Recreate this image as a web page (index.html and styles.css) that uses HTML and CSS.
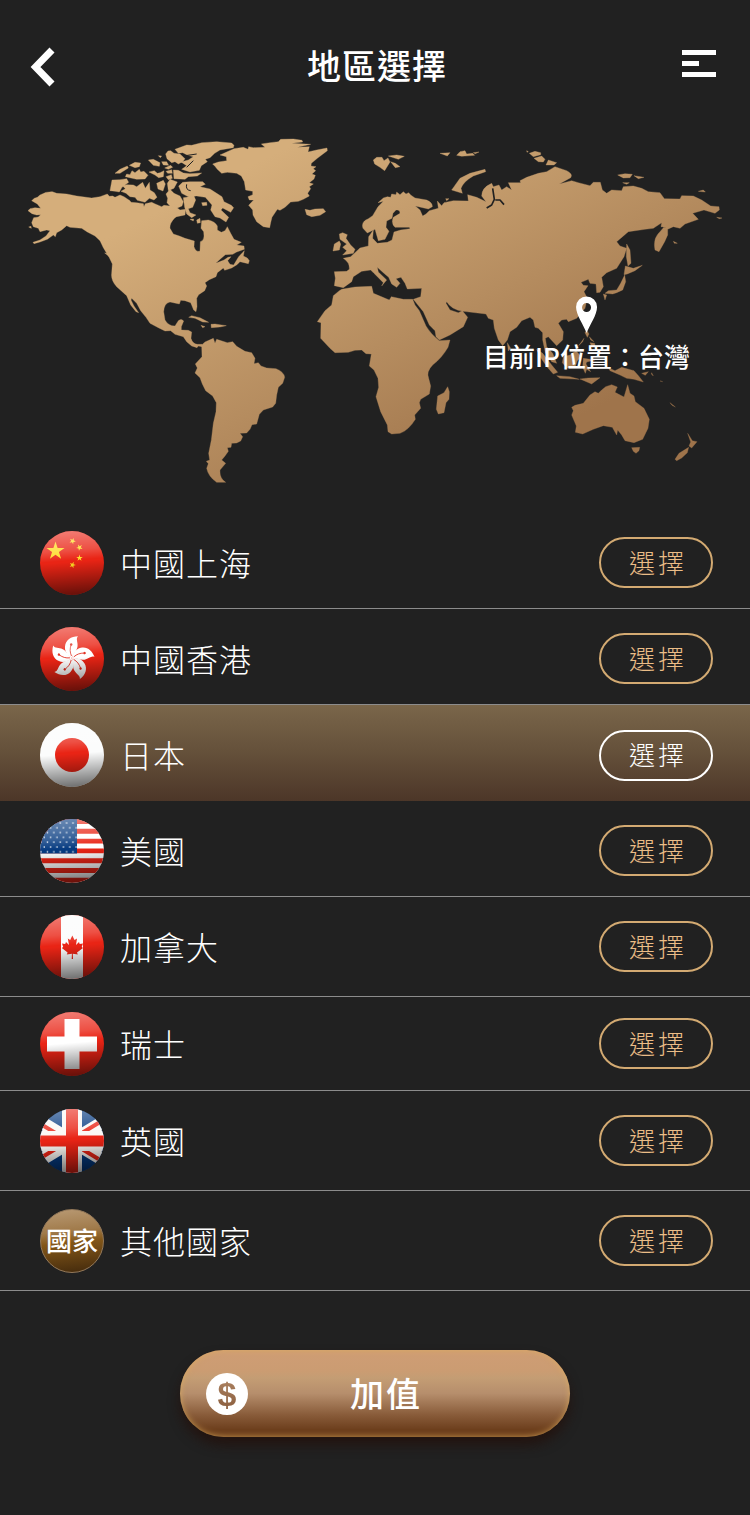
FILE: index.html
```html
<!DOCTYPE html>
<html lang="zh-Hant">
<head>
<meta charset="utf-8">
<meta name="viewport" content="width=device-width, initial-scale=1">
<title>地區選擇</title>
<link rel="stylesheet" href="styles.css">
</head>
<body>
<svg class="defs" aria-hidden="true">
  <defs>
    <linearGradient id="gloss" x1="0.46" y1="0" x2="0.54" y2="1">
      <stop offset="0" stop-color="#fff" stop-opacity=".4"/>
      <stop offset=".3" stop-color="#fff" stop-opacity=".2"/>
      <stop offset=".46" stop-color="#fff" stop-opacity="0"/>
      <stop offset=".48" stop-color="#000" stop-opacity="0"/>
      <stop offset="1" stop-color="#000" stop-opacity=".56"/>
    </linearGradient>
    <clipPath id="disc"><circle cx="32" cy="32" r="32"/></clipPath>
    <pattern id="stars" width="12.8" height="9.6" patternUnits="userSpaceOnUse" x="-1" y="2">
      <circle cx="2" cy="2" r=".8" fill="#fff"/><circle cx="8.4" cy="2" r=".8" fill="#fff"/>
      <circle cx="5.2" cy="6.8" r=".8" fill="#fff"/><circle cx="11.6" cy="6.8" r=".8" fill="#fff"/>
    </pattern>
    <path id="star" d="M0-1 .225-.309.951-.309.363.118.588.809 0 .382-.588.809-.363.118-.951-.309-.225-.309Z"/>
    <g id="petal">
      <path fill="#fff" d="M32 31C27 28 24.500 24 25 19.500C25.500 13 31 9.500 38 9.300C35.500 12 38 15 37.500 19.500C37 24 33.500 25.500 32 31Z"/>
      <path fill="none" stroke="#e02a1c" stroke-width=".8" d="M31.500 29C29.800 25 29.800 22 31 18"/>
      <circle cx="31.200" cy="17.500" r="1.200" fill="#e02a1c"/>
    </g>
  </defs>
</svg>

<header class="topbar">
  <button class="icon-button" type="button" aria-label="返回">
    <svg width="26" height="40" viewBox="0 0 26 40"><path d="M22 3 5.500 20 22 37" fill="none" stroke="#fff" stroke-width="7"/></svg>
  </button>
  <h1 class="title">地區選擇</h1>
  <button class="icon-button menu-button" type="button" aria-label="選單">
    <svg width="34" height="28" viewBox="0 0 34 28"><path d="M0 0h34v5H0zM0 11h17v5H0zM0 22h34v5H0z" fill="#fff"/></svg>
  </button>
</header>

<main>
<figure class="map">
  <svg class="world" viewBox="0 134 750 379" role="img" aria-label="世界地圖">
    <defs>
      <linearGradient id="gold" x1="0" y1="0" x2="1" y2="1">
        <stop offset=".2" stop-color="#d5ae7b"/>
        <stop offset=".56" stop-color="#b58c5f"/>
        <stop offset=".8" stop-color="#9f744b"/>
      </linearGradient>
      <mask id="land" maskUnits="userSpaceOnUse" x="0" y="134" width="750" height="379">
        <g fill="#fff" stroke="#fff" stroke-width="1" stroke-linejoin="round">
          <!-- North America and the Arctic islands -->
          <g transform="translate(20 130) scale(.33333)">
            <path d="M35 212 43 205 52 202 60 195Q78 184 97 185L110 190 140 192 170 198 215 204 240 200 262 192 268 199 278 198 285 202 300 195 312 200 330 212 333 217 350 218 370 221 372 230 376 221 395 217 404 221 425 230 432 226 450 228 441 218 443 205 438 192 450 178 462 190 480 198 490 215 486 228 472 234 480 240 497 238 495 255 470 260 465 263Q448 280 450 295L460 312Q480 318 495 325L523 333 522 350Q528 368 540 363L541 335Q552 332 552 318L551 305 543 295 545 272 565 270Q585 274 592 288L592 300 604 307 615 302 622 290 632 310 642 328 664 337 650 345 672 348 673 358 650 366 638 373 616 374 602 386 587 400 612 390 624 382 633 380 623 392 630 403 641 405 650 390 656 380 673 362 670 378 682 384 688 392 685 401 660 395 651 404 635 414 614 421 610 414 592 428 588 440 568 449 555 458 560 468 554 482 536 494 530 505 531 530 528 545 521 540 512 518 495 512 482 511 478 522 450 516Q432 520 431 545L435 570Q445 588 465 588L475 572Q485 564 491 573L484 590 484 600 505 601 515 606 513 625Q518 642 532 643L546 643 546 650 535 648 531 653 515 648 500 635 490 620 465 613 452 602 435 603 415 593 390 580 378 562 362 542 350 520 335 505 333 510 342 528 356 548 348 545 332 525 320 497 290 470Q272 450 275 430L277 402 268 383 250 353 240 332 225 318 202 306 185 295 150 292 140 287 125 300 110 308 106 320 100 315 82 328 60 336 42 341 39 337 60 330 78 318 90 302 80 300 60 305 55 295 40 290 35 278 41 263 55 261 62 254 50 255 36 251 24 242 30 236 45 233 62 235 52 222Z"/>
            <path d="M270 182 276 150 300 149 320 146 326 157 306 172 298 186 285 184ZM303 184 316 176 308 168 320 164 340 165 350 170 368 157 376 175 388 157 390 180 403 188 411 202 402 210 388 205 375 217 352 211 345 202 330 200 318 190ZM316 140 320 132 330 134 336 122 345 128 358 118 362 126 372 124 384 136 375 147 350 148ZM285 130 300 118 322 108 325 114 300 130ZM328 106 345 97 362 99 358 110 345 113ZM385 90 400 88 420 98 418 109 400 106ZM387 126 403 122 412 130 420 128 432 122 430 140 416 143 405 135ZM410 160 430 151 436 162 429 183 414 177ZM415 77 425 78 421 83ZM437 72 444 63 452 62 462 70 480 72 495 86 488 95 475 102 465 95 455 98 441 86ZM425 95 440 95 446 106 430 105ZM434 114 452 106 458 112 445 118ZM438 124 455 119 457 130 443 130ZM438 140 454 134 457 145 445 149ZM442 160 450 148 472 156 462 175 445 182Z"/>
            <path d="M465 58 500 45 515 46 545 38 590 35 635 39 642 46 640 53 600 60 584 70 570 83 556 88 562 95 544 107 538 121 510 126 485 118 500 107 483 96 505 90 520 80 503 76 488 68 475 70ZM460 120 475 121 490 129 510 131 545 129 532 138 505 140 495 148 462 146ZM476 168 488 157 510 155 548 155 556 163 540 170 570 177 590 190 606 200 612 215 634 226 641 233 632 247 608 234 603 240 626 262 618 276 600 264 585 260 572 240 576 225 556 202 530 198 505 200 485 190ZM490 203 522 198 527 210 518 232 505 236 510 248 528 255 515 263 500 252 494 232ZM545 218 560 217 561 226 548 227ZM510 268 521 267 520 273ZM530 270 540 265 541 278 532 280ZM254 369 268 371 282 380 287 392 276 386ZM116 292 125 283 137 286 125 296ZM26 291 33 289 34 295Z"/>
            <path d="M500 163Q496 180 512 182M540 205 532 230M490 78 530 72M500 112 520 92" fill="none" stroke="#000" stroke-width="3"/>
            <path d="M578 102 595 96 620 92 619 80 600 75 620 66 642 56 670 52 684 58 686 50 700 53 735 52 724 42 750 38 775 35 782 28 820 27 846 31 848 36 815 40 872 43 832 52 868 50 864 66 890 60 921 54 922 62 905 75 892 85 874 100 873 108 888 110 880 116 887 122 876 132 886 136 882 147 868 158 880 162 868 170 872 176 863 190 868 198 850 208 835 214 812 216 795 232 780 241 772 238 756 262 752 278 749 293 730 290 710 275 699 255 698 240 686 226 701 210 688 210 684 200 698 194 698 184 677 180 673 155 664 138 650 130 622 127 605 130 592 118 585 109Z"/>
          </g>
          <!-- South America and the Caribbean -->
          <g transform="translate(150 290) scale(.33333)">
            <path d="M155 165 165 156 190 145 195 160 200 148 232 158 248 155 260 169 285 184 305 188 315 205 312 221 325 218 333 228 350 234 378 236Q402 245 404 262L398 280 385 292 380 315 377 340 368 351 340 360 328 373 320 402 306 404 300 418 290 429 270 430 278 440 272 453 260 459 245 460 243 472 232 473 235 484 225 498 215 510 227 520 210 540Q208 565 227 577L200 577Q175 560 170 535L175 521 169 514 179 510 176 490 184 450 190 400 198 365 199 338 188 318 167 302 157 282 150 263 135 249 142 234 136 222 156 200ZM116 82 125 77 150 83 176 97 158 96 135 85ZM183 103 195 102 229 107 210 111 184 113ZM153 106 165 110 158 113Z"/>
          </g>
          <!-- Europe and Asia -->
          <g transform="translate(300 140) scale(.33333)">
            <path d="M103 395 140 394 148 388Q150 368 130 355L152 350 165 338 180 324 205 318 206 290 220 270 218 295 232 310 262 307 276 300 282 276 302 270 330 266 328 262 285 262Q272 250 280 232L300 220Q300 208 288 210L279 220 276 235 260 243 258 262 267 274 255 298 235 302 225 268 202 279 189 265Q182 245 205 236L218 227 234 200 250 184 234 188 250 174 262 170 272 172 275 162 288 164 290 156 300 164 310 155 318 162 326 158 332 165 345 174 380 180Q398 188 397 200L385 207 346 198 360 210 368 228 378 222 388 212 415 205 412 183 425 197 432 188 460 182 505 183 503 164 530 172 558 185 545 168Q545 143 575 130L580 140 597 135 605 150 620 140 635 150 625 128 662 128 660 122 680 112 715 100 740 95 765 80 800 92Q820 102 812 113L778 132 815 122 835 128 870 137 880 127 901 127 907 150 920 160 935 150 965 152 970 140 1000 138 1025 145 1045 155 1080 158 1093 176 1140 177 1145 167 1180 168 1205 180 1232 198 1257 200 1258 210 1245 220 1212 210 1178 220 1195 238 1155 252 1140 265 1120 260 1103 268 1103 285 1094 305 1077 335 1065 330Q1058 295 1080 275L1112 238 1100 262 1083 260 1085 248 1060 265 1035 268 985 275 950 305 960 318 980 325 972 350 950 385 920 398 905 412 910 440 900 457 890 458 888 432 870 430 865 418 843 427 850 436 864 437 852 455 862 475 855 505 830 535 805 545 800 538 785 540 775 550 790 575 788 600 770 617 745 590 736 595 740 620 758 640 770 670 755 665 736 638 728 600 728 578 715 565 705 562 700 540 690 532 665 542 650 562 630 575 622 600 608 617 595 600 583 565 580 540 565 535 558 522 490 514Q455 510 440 485L438 490 450 510 475 518 487 512 503 532 490 560 450 585 418 600 408 590 405 572 388 555 370 515 340 478 362 470 365 445 322 447 315 430 303 412 288 416 300 430 290 442 275 432 266 412 250 398 232 382 235 396 260 420 245 438 250 428 222 400 212 390 185 394 160 410 155 425 130 443 103 437 106 415Z"/>
            <path d="M118 282 128 278 142 284 138 295 152 315 165 328 160 340 128 345 140 332 128 322 140 312 120 298ZM103 312 118 303 122 312 118 330 99 333ZM15 208 30 211 45 207 70 206 77 215 60 226 35 230 20 224ZM220 60 230 52 246 52 252 62 264 54 270 66 254 92 240 82 224 72ZM265 48 290 45 313 49 295 58ZM272 65 286 70 300 80 286 83ZM420 40 450 38 442 48ZM470 46 480 35 495 32 500 42 518 40 524 46 485 49ZM520 38 537 36 526 41ZM455 150 462 140 480 115 510 100 555 88 557 95 520 108Q490 125 483 145L487 160ZM680 32 685 35 681 37ZM688 40 705 34 722 38 722 44 700 50ZM702 55 725 48 735 58 730 66 715 65ZM738 75 745 60 770 68 762 75ZM953 105 975 101 997 103 990 113 970 114ZM1002 107 1032 112 1015 116ZM968 128 988 128 980 133ZM1195 154 1210 150 1216 156ZM1250 232 1266 234 1258 236ZM980 312 990 330 993 370 984 378 979 350ZM976 378 1000 385 1027 376 1005 392 982 402 972 404ZM974 405 977 425 968 450 950 458 938 462 915 460 925 452 950 450 962 430ZM910 462 920 465 915 480ZM1120 304 1132 310 1123 310ZM284 278 296 280 290 288ZM437 176 447 176 440 182Z"/>
            <path d="M578 145 583 178 575 195 560 204M586 180 600 180 612 194" fill="none" stroke="#000" stroke-width="5"/>
          </g>
          <!-- Africa -->
          <g transform="translate(300 270) scale(.33333)">
            <path d="M125 58 165 51 215 49 220 70 268 90 274 80 310 88 338 88 345 105 358 122 378 168Q392 192 418 212L450 210 444 232Q425 265 398 285Q378 305 386 325L392 348 388 372 362 388 358 398 362 415 344 435 346 448Q325 482 300 490L275 492 264 485 262 465 242 425 228 380 236 352 234 325 222 300 208 288 214 252 198 251 185 240 165 241 145 247 105 248 90 235 62 205 63 158 52 155 75 122 95 105 100 77 118 62ZM443 350 448 365 447 388 438 398 432 428 415 432 409 418 413 378 432 368Z"/>
          </g>
          <!-- South-East Asia and Oceania -->
          <g transform="translate(460 290) scale(.33333)">
            <path d="M142 158 152 175 145 183ZM230 178 248 190 275 225 293 247 280 252 262 232 240 200ZM290 257 330 260 358 268 300 265ZM360 267 385 264 420 263 395 282ZM310 200 330 195 348 182 364 200 352 212 345 232 320 234 307 218ZM370 205 405 210 380 216 378 222 392 245 380 238 376 250 368 232ZM375 128 380 120 387 132 382 142ZM388 140 402 155 392 150ZM390 158 404 160 406 172 396 172ZM356 167 372 145 368 155ZM445 233 465 242 485 232 522 242 536 258 550 276 522 268 500 265 480 255 450 242ZM545 250 565 245 556 256ZM575 248 580 258 574 252ZM600 273 608 275ZM630 338 646 351 636 346ZM335 352 345 346 370 340 382 325 390 315 405 305 415 310 425 300 437 290 455 284 472 291 465 307 492 321 503 284 510 310 522 318 526 335 552 355 568 388 564 415 548 448 522 458 495 452 485 435 473 420 470 435 457 412 430 407 400 418 368 432 346 427 349 408 335 375 340 362ZM515 473 539 472 537 482 528 490 520 484ZM683 430 697 452 711 455 695 474 687 468 692 456ZM686 472 682 488 665 504 650 512 645 508 657 490Z"/>
          </g>
        </g>
      </mask>
    </defs>
    <rect x="28" y="138" width="694" height="346" fill="url(#gold)" mask="url(#land)"/>
  </svg>
  <figcaption class="location">
    <svg class="pin" width="22" height="38" viewBox="0 0 22 38"><path fill="#fff" fill-rule="evenodd" d="M11 .500A10.500 10.500 0 0 0 .500 11C.500 19 8 29 11 37C14 29 21.500 19 21.500 11A10.500 10.500 0 0 0 11 .500ZM11 7A4.500 4.500 0 1 1 11 16A4.500 4.500 0 1 1 11 7Z"/></svg>
    <span class="location-text">目前IP位置：台灣</span>
  </figcaption>
</figure>

<ul class="regions">
  <li class="region">
    <svg class="flag" viewBox="0 0 64 64" aria-hidden="true"><g clip-path="url(#disc)"><path fill="#e92415" d="M0 0h64v64H0z"/>
      <g fill="#ffdc24"><use href="#star" transform="translate(15.500 20) scale(9.500)"/><use href="#star" transform="translate(32.500 10) rotate(25) scale(3.400)"/><use href="#star" transform="translate(39.500 16.500) rotate(45) scale(3.400)"/><use href="#star" transform="translate(39.500 27) scale(3.400)"/><use href="#star" transform="translate(32.500 34) rotate(20) scale(3.400)"/></g>
      <path fill="url(#gloss)" d="M0 0h64v64H0z"/></g></svg>
    <span class="name" id="r1">中國上海</span>
    <button class="select" type="button" aria-describedby="r1">選擇</button>
  </li>
  <li class="region">
    <svg class="flag" viewBox="0 0 64 64" aria-hidden="true"><g clip-path="url(#disc)"><path fill="#e92415" d="M0 0h64v64H0z"/>
      <use href="#petal"/><use href="#petal" transform="rotate(72 32 31)"/><use href="#petal" transform="rotate(144 32 31)"/><use href="#petal" transform="rotate(216 32 31)"/><use href="#petal" transform="rotate(288 32 31)"/>
      <path fill="url(#gloss)" d="M0 0h64v64H0z"/></g></svg>
    <span class="name" id="r2">中國香港</span>
    <button class="select" type="button" aria-describedby="r2">選擇</button>
  </li>
  <li class="region selected">
    <svg class="flag" viewBox="0 0 64 64" aria-hidden="true"><g clip-path="url(#disc)"><path fill="#fbfcfc" d="M0 0h64v64H0z"/><circle cx="32" cy="32" r="17" fill="#e92415"/>
      <path fill="url(#gloss)" d="M0 0h64v64H0z"/></g></svg>
    <span class="name" id="r3">日本</span>
    <button class="select" type="button" aria-describedby="r3">選擇</button>
  </li>
  <li class="region">
    <svg class="flag" viewBox="0 0 64 64" aria-hidden="true"><g clip-path="url(#disc)"><path fill="#fff" d="M0 0h64v64H0z"/>
      <path stroke="#e92415" stroke-width="4.900" d="M0 2.500h64M0 12.300h64M0 22.100h64M0 31.900h64M0 41.700h64M0 51.500h64M0 61.300h64"/>
      <path fill="#053a80" d="M0 0h37v34.500H0z"/><path fill="url(#stars)" d="M0 0h37v34.500H0z"/>
      <path fill="url(#gloss)" d="M0 0h64v64H0z"/></g></svg>
    <span class="name" id="r4">美國</span>
    <button class="select" type="button" aria-describedby="r4">選擇</button>
  </li>
  <li class="region roomy">
    <svg class="flag" viewBox="0 0 64 64" aria-hidden="true"><g clip-path="url(#disc)"><path fill="#e92415" d="M0 0h64v64H0z"/><path fill="#fbfcfc" d="M21 0h22v64H21z"/>
      <path fill="#e92415" d="M32.300 20.500 34.500 25 37 23.500 36 30 39 27 39.700 29 43 28.500 41.700 32 43 33 37 37.500 37.800 39.500 32.800 38.700 33 44H31.700L31.900 38.700 26.800 39.500 27.600 37.500 21.800 33 23.200 32 22 28.500 25.200 29 26 27 29 30 27.800 23.500 30.200 25Z"/>
      <path fill="url(#gloss)" d="M0 0h64v64H0z"/></g></svg>
    <span class="name" id="r5">加拿大</span>
    <button class="select" type="button" aria-describedby="r5">選擇</button>
  </li>
  <li class="region compact">
    <svg class="flag" viewBox="0 0 64 64" aria-hidden="true"><g clip-path="url(#disc)"><path fill="#e92415" d="M0 0h64v64H0z"/><path fill="#fff" d="M24.500 7h15v17.500H57v15H39.500V57h-15V39.500H7v-15h17.500z"/>
      <path fill="url(#gloss)" d="M0 0h64v64H0z"/></g></svg>
    <span class="name" id="r6">瑞士</span>
    <button class="select" type="button" aria-describedby="r6">選擇</button>
  </li>
  <li class="region roomy">
    <svg class="flag" viewBox="0 0 64 64" aria-hidden="true"><g clip-path="url(#disc)"><path fill="#053a80" d="M0 0h64v64H0z"/>
      <path stroke="#fbf8f4" stroke-width="13" d="M-21 0 85 64M85 0-21 64"/>
      <path stroke="#e92415" stroke-width="4" d="M-21 2 32 34M85-2 32 30M-21 62 32 30M85 66 32 34"/>
      <path fill="#fbf8f4" d="M22 0h20v64H22zM0 22h64v20H0z"/><path fill="#e92415" d="M26 0h12v64H26zM0 26.500h64v11H0z"/>
      <path fill="url(#gloss)" d="M0 0h64v64H0z"/></g></svg>
    <span class="name" id="r7">英國</span>
    <button class="select" type="button" aria-describedby="r7">選擇</button>
  </li>
  <li class="region roomy">
    <span class="flag badge">國家</span>
    <span class="name" id="r8">其他國家</span>
    <button class="select" type="button" aria-describedby="r8">選擇</button>
  </li>
</ul>

<div class="actions">
  <button class="topup" type="button"><span class="coin"><span class="dollar">$</span></span><span class="topup-label">加值</span></button>
</div>
</main>
</body>
</html>
```
FILE: styles.css
```css
* { box-sizing: border-box; }

body {
  margin: 0;
  min-height: 100vh;
  background: #212121;
  color: #fff;
  font-family: "Noto Sans CJK TC", "Noto Sans", sans-serif;
}

button {
  font: inherit;
  color: inherit;
  cursor: pointer;
}

.defs {
  position: absolute;
  width: 0;
  height: 0;
}

.topbar {
  display: flex;
  align-items: center;
  justify-content: space-between;
  height: 134px;
  padding: 0 34px 0 30px;
}

.icon-button {
  display: flex;
  width: 42px;
  padding: 0;
  border: 0;
  background: none;
}

.menu-button {
  width: 34px;
  padding-bottom: 6px;
}

.title {
  margin: 0;
  padding-bottom: 4px;
  font-size: 34px;
  line-height: 48px;
  font-weight: 500;
  letter-spacing: 1px;
}

.map {
  position: relative;
  margin: 0;
}

.world {
  display: block;
  width: 100%;
}

.location {
  position: absolute;
  left: 78.2%;
  top: 42.8%;
  display: flex;
  flex-direction: column;
  align-items: center;
  gap: 4px;
  transform: translateX(-50%);
  white-space: nowrap;
}

.location-text {
  font-size: 26px;
  line-height: 36px;
  font-weight: 500;
}

.regions {
  margin: 0;
  padding: 0;
  list-style: none;
}

.region {
  display: flex;
  align-items: center;
  min-height: 96px;
  padding: 4px 37px 0 40px;
  border-bottom: 1px solid #8c8c8c;
}

.roomy {
  min-height: 100px;
  padding-top: 0;
}

.compact {
  min-height: 94px;
  padding-top: 0;
}

.selected {
  border-bottom: 0;
  background: linear-gradient(#7a664a, #64503a 50%, #4c3628);
}

.flag {
  flex: none;
  width: 64px;
  height: 64px;
  margin-right: 16px;
}

.badge {
  display: flex;
  align-items: center;
  justify-content: center;
  padding-bottom: 2px;
  border: 1px solid #94795a;
  border-radius: 50%;
  background: linear-gradient(174deg, #b99a74, #a07a4a 35%, #835719 52%, #42290c);
  font-size: 26px;
  font-weight: 500;
}

.name {
  flex: 1;
  padding-bottom: 2px;
  font-size: 32px;
  line-height: 48px;
  font-weight: 300;
  letter-spacing: 1px;
}

.select {
  width: 114px;
  height: 51px;
  padding: 0 0 2px 4px;
  border: 2px solid #d3aa72;
  border-radius: 26px;
  background: none;
  color: #ebbd87;
  font-size: 26px;
  line-height: 36px;
  font-weight: 300;
  letter-spacing: 3px;
}

.selected .select {
  border-color: #fff;
  color: #fff;
}

.actions {
  display: flex;
  justify-content: center;
  padding: 59px 0 78px;
}

.topup {
  display: flex;
  align-items: center;
  width: 52%;
  min-width: 240px;
  height: 87px;
  padding: 0 46px 0 26px;
  border: 0;
  border-radius: 44px;
  background: linear-gradient(#cf9d75, #cb9c72 24%, #c49d74 32%, #b68e6c 50%, #885b39 75%, #6c3e1c 92%);
  box-shadow: inset 0 0 6px rgba(222, 174, 92, .8), 0 8px 12px rgba(36, 14, 8, .7);
}

.coin {
  display: flex;
  align-items: center;
  justify-content: center;
  width: 42px;
  height: 42px;
  border-radius: 50%;
  background: #fff;
}

.dollar {
  background: linear-gradient(#b08766, #875a3a);
  background-clip: text;
  color: transparent;
  font: bold 34px/38px "Liberation Sans", Arial, sans-serif;
}

.topup-label {
  flex: 1;
  padding-bottom: 2px;
  font-size: 34px;
  line-height: 48px;
  font-weight: 500;
  letter-spacing: 2px;
}
```
